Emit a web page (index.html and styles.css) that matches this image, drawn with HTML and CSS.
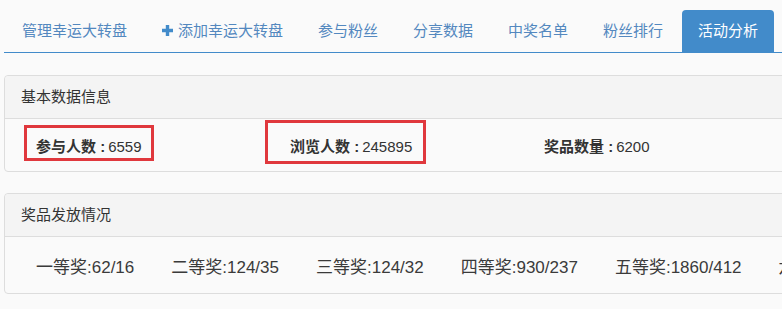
FILE: index.html
```html
<!DOCTYPE html>
<html lang="zh-CN">
<head>
<meta charset="utf-8">
<title>活动分析</title>
<link rel="stylesheet" href="styles.css">
</head>
<body>
<div class="page">
  <ul class="tabs">
    <li class="tab">管理幸运大转盘</li>
    <li class="tab"><svg class="plus" width="11" height="11" viewBox="0 0 11 11"><path d="M3.8 0h3.4v3.8H11v3.4H7.2V11H3.8V7.2H0V3.8h3.8z" fill="#428bca"/></svg>添加幸运大转盘</li>
    <li class="tab">参与粉丝</li>
    <li class="tab">分享数据</li>
    <li class="tab">中奖名单</li>
    <li class="tab">粉丝排行</li>
    <li class="tab active">活动分析</li>
  </ul>

  <section class="panel">
    <div class="panel-head">基本数据信息</div>
    <div class="panel-body stats">
      <div class="stat"><b>参与人数 :</b>6559</div>
      <div class="stat"><b>浏览人数 :</b>245895</div>
      <div class="stat"><b>奖品数量 :</b>6200</div>
      <span class="mark mark-1"></span>
      <span class="mark mark-2"></span>
    </div>
  </section>

  <section class="panel panel-2">
    <div class="panel-head">奖品发放情况</div>
    <div class="panel-body prizes">
      <span class="prize">一等奖:62/16</span>
      <span class="prize">二等奖:124/35</span>
      <span class="prize">三等奖:124/32</span>
      <span class="prize">四等奖:930/237</span>
      <span class="prize">五等奖:1860/412</span>
      <span class="prize">六等奖:3720/830</span>
    </div>
  </section>
</div>
</body>
</html>
```

FILE: styles.css
```css
html, body {
  margin: 0;
  padding: 0;
  overflow: hidden;
  background: #fafafa;
}

body {
  font-family: "Liberation Sans", "Noto Sans CJK SC", sans-serif;
  color: #333;
  font-size: 15px;
}

.page {
  width: 800px;
  padding: 10px 0 0 4px;
}

.tabs {
  list-style: none;
  margin: 0;
  padding: 0 0 0 2px;
  display: flex;
  border-bottom: 1px solid #428bca;
}

.tab {
  height: 42px;
  line-height: 42px;
  padding: 0 16px;
  margin-right: 3px;
  color: #5388bf;
  font-size: 15px;
  white-space: nowrap;
  display: flex;
  align-items: center;
  border-radius: 4px 4px 0 0;
}

.tab.active {
  background: #428bca;
  color: #fff;
}

.plus {
  margin-right: 5px;
  margin-top: -1px;
}

.panel {
  margin-top: 22px;
  border: 1px solid #dddddd;
  border-radius: 4px;
  background: #fafafa;
}

.panel-2 {
  margin-top: 21px;
}

.panel-head {
  height: 42px;
  line-height: 42px;
  padding: 0 16px;
  background: #f4f4f4;
  border-bottom: 1px solid #dddddd;
  border-radius: 4px 4px 0 0;
  font-size: 15px;
}

.panel-body {
  position: relative;
}

.stats {
  height: 52px;
  display: grid;
  grid-template-columns: 254px 254px 254px;
  align-items: center;
  padding-left: 31px;
}

.stat {
  font-size: 15px;
  white-space: nowrap;
}

.stat b {
  font-weight: bold;
  margin-right: 3px;
}

.mark {
  position: absolute;
  border: 3px solid #e0383d;
}

.mark-1 {
  left: 19px;
  top: 6px;
  width: 124px;
  height: 30px;
}

.mark-2 {
  left: 260px;
  top: 1px;
  width: 155px;
  height: 38px;
}

.prizes {
  height: 56px;
  display: flex;
  align-items: center;
  gap: 37px;
  padding-left: 31px;
  white-space: nowrap;
}

.prize {
  font-size: 17px;
  color: #3a3a3a;
}
```
